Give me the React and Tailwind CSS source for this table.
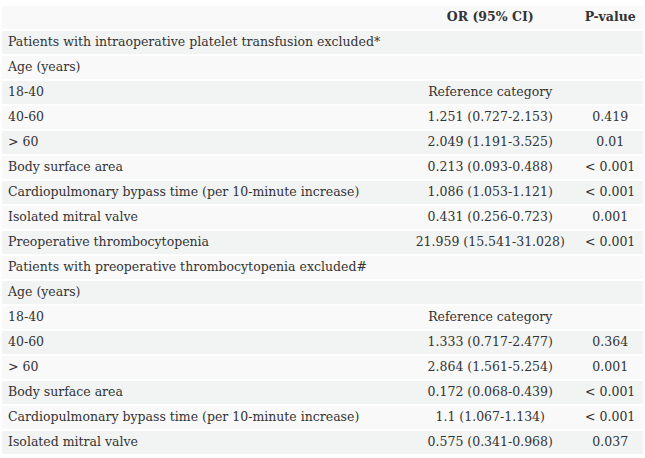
import React from 'react';

const rows = [
  ['Patients with intraoperative platelet transfusion excluded*', '', ''],
  ['Age (years)', '', ''],
  ['18-40', 'Reference category', ''],
  ['40-60', '1.251 (0.727-2.153)', '0.419'],
  ['> 60', '2.049 (1.191-3.525)', '0.01'],
  ['Body surface area', '0.213 (0.093-0.488)', '< 0.001'],
  ['Cardiopulmonary bypass time (per 10-minute increase)', '1.086 (1.053-1.121)', '< 0.001'],
  ['Isolated mitral valve', '0.431 (0.256-0.723)', '0.001'],
  ['Preoperative thrombocytopenia', '21.959 (15.541-31.028)', '< 0.001'],
  ['Patients with preoperative thrombocytopenia excluded#', '', ''],
  ['Age (years)', '', ''],
  ['18-40', 'Reference category', ''],
  ['40-60', '1.333 (0.717-2.477)', '0.364'],
  ['> 60', '2.864 (1.561-5.254)', '0.001'],
  ['Body surface area', '0.172 (0.068-0.439)', '< 0.001'],
  ['Cardiopulmonary bypass time (per 10-minute increase)', '1.1 (1.067-1.134)', '< 0.001'],
  ['Isolated mitral valve', '0.575 (0.341-0.968)', '0.037'],
];

export default function App() {
  return (
    <div className="bg-white pt-[4px] px-0.5 text-[12.5px] text-[#333] font-['DejaVu_Serif',serif]">
      <table className="w-full border-separate border-spacing-x-0 border-spacing-y-0.5">
        <thead>
          <tr className="bg-[#f9f9f9] h-[23px]">
            <th className="px-[6px]"></th>
            <th className="px-1 font-bold text-center">OR (95% CI)</th>
            <th className="px-1 font-bold text-center">P-value</th>
          </tr>
        </thead>
        <tbody>
          {rows.map((r, i) => (
            <tr key={i} className={i % 2 === 0 ? 'bg-[#f2f4f4] h-[23px]' : 'bg-[#f9f9f9] h-[23px]'}>
              {r[1] === '' && r[2] === '' ? (
                <td colSpan={3} className="pl-[6px] pr-1 whitespace-nowrap">{r[0]}</td>
              ) : (
                <>
                  <td className="pl-[6px] pr-1 whitespace-nowrap">{r[0]}</td>
                  <td className="px-1 text-center whitespace-nowrap">{r[1]}</td>
                  <td className="px-1 text-center whitespace-nowrap">{r[2]}</td>
                </>
              )}
            </tr>
          ))}
        </tbody>
      </table>
    </div>
  );
}
